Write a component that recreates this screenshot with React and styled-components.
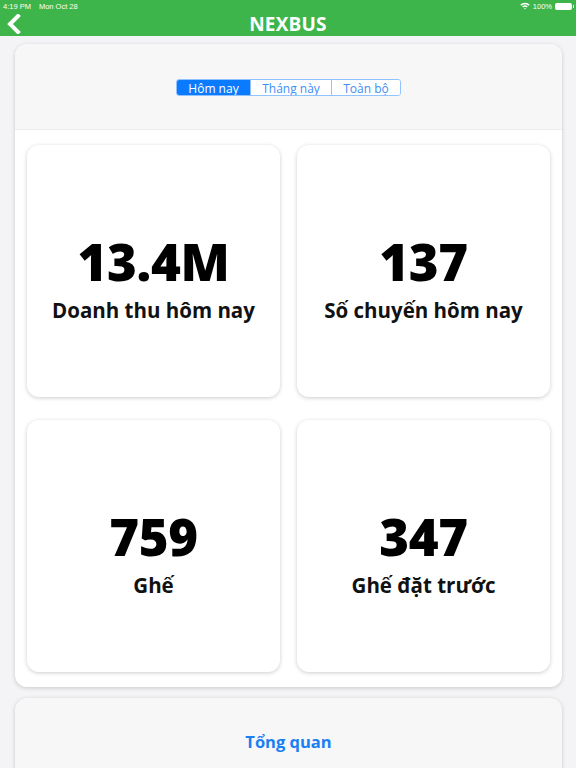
import React, { useState } from "react";
import styled, { createGlobalStyle } from "styled-components";

const Global = createGlobalStyle`
  html, body { margin: 0; padding: 0; background: #f4f4f6; }
  body { font-family: "Open Sans", "Noto Sans", sans-serif; }
  * { box-sizing: border-box; }
`;

const Page = styled.div`
  width: 576px;
  height: 768px;
  overflow: hidden;
  background: #f4f4f6;
  display: flex;
  flex-direction: column;
`;

const Header = styled.header`
  background: #3db54a;
  height: 36px;
  flex-shrink: 0;
  display: flex;
  flex-direction: column;
  position: relative;
`;

const StatusBar = styled.div`
  height: 12px;
  display: flex;
  justify-content: space-between;
  align-items: center;
  padding: 0 4px 0 3px;
  color: #fff;
  font-family: "Liberation Sans", Arial, sans-serif;
  font-size: 7.5px;
`;

const StatusGroup = styled.div`
  display: flex;
  align-items: center;
  gap: ${(p) => p.gap || 4}px;
`;

const Battery = styled.span`
  width: 17px;
  height: 7px;
  border-radius: 2px;
  background: #fff;
  position: relative;
  &::after {
    content: "";
    position: absolute;
    right: -2px;
    top: 2px;
    width: 1px;
    height: 3px;
    background: #fff;
  }
`;

const NavBar = styled.div`
  flex: 1;
  display: flex;
  align-items: center;
  justify-content: center;
  position: relative;
`;

const BackButton = styled.button`
  position: absolute;
  left: 6px;
  top: 2px;
  border: 0;
  background: none;
  padding: 0;
  display: flex;
`;

const Title = styled.h1`
  margin: 0;
  color: #fff;
  font-family: "Open Sans", sans-serif;
  font-weight: 700;
  font-size: 19px;
  letter-spacing: 0.2px;
  line-height: 1;
`;

const Content = styled.main`
  flex-shrink: 0;
  padding: 8px 14px 0 15px;
  display: flex;
  flex-direction: column;
  gap: 11px;
`;

const Panel = styled.section`
  background: #fff;
  border-radius: 12px;
  box-shadow: 0 1px 4px rgba(0, 0, 0, 0.18);
  overflow: hidden;
`;

const FilterBar = styled.div`
  background: #f7f7f8;
  height: 86px;
  display: flex;
  align-items: center;
  justify-content: center;
  border-bottom: 1px solid #ececec;
  padding-top: 1px;
`;

const Segmented = styled.div`
  display: flex;
  height: 17px;
  border: 1px solid #92c2ff;
  border-radius: 3px;
  overflow: hidden;
`;

const Segment = styled.button`
  border: 0;
  border-left: ${(p) => (p.$first ? "0" : "1px solid #92c2ff")};
  background: ${(p) => (p.$active ? "#0a7aff" : "#fff")};
  color: ${(p) => (p.$active ? "#fff" : "#3d8ef5")};
  font-family: "Open Sans", sans-serif;
  font-size: 12px;
  width: ${(p) => p.$w}px;
  padding: 1px 0 0;
  line-height: 15px;
  height: 100%;
  overflow: hidden;
  cursor: pointer;
`;

const Grid = styled.div`
  display: grid;
  grid-template-columns: 1fr 1fr;
  column-gap: 17px;
  row-gap: 23px;
  padding: 15px 12px 15px 12px;
`;

const StatCard = styled.div`
  height: 252px;
  border-radius: 12px;
  background: #fff;
  box-shadow: 0 1px 4px rgba(0, 0, 0, 0.2);
  display: flex;
  flex-direction: column;
  align-items: center;
  justify-content: center;
  padding-top: 15px;
`;

const StatValue = styled.div`
  font-family: "Open Sans", sans-serif;
  font-weight: 800;
  font-size: 51px;
  line-height: 1;
  color: #000;
  letter-spacing: -0.3px;
`;

const StatLabel = styled.div`
  margin-top: 13px;
  font-family: "Open Sans", sans-serif;
  font-weight: 700;
  font-size: 20.5px;
  color: #111;
  line-height: 1;
`;

const SummaryPanel = styled.section`
  background: #f7f7f8;
  border-radius: 12px 12px 0 0;
  box-shadow: 0 1px 4px rgba(0, 0, 0, 0.18);
  height: 90px;
  display: flex;
  justify-content: center;
  padding-top: 36px;
`;

const SummaryLink = styled.a`
  font-family: "Open Sans", sans-serif;
  font-weight: 700;
  font-size: 16.5px;
  color: #1a7ff2;
  line-height: 1;
  text-decoration: none;
`;

const stats = [
  { value: "13.4M", label: "Doanh thu hôm nay" },
  { value: "137", label: "Số chuyến hôm nay" },
  { value: "759", label: "Ghế" },
  { value: "347", label: "Ghế đặt trước" },
];

const tabs = [
  { label: "Hôm nay", w: 73 },
  { label: "Tháng này", w: 81 },
  { label: "Toàn bộ", w: 69 },
];

export default function App() {
  const [active, setActive] = useState(0);
  return (
    <>
      <Global />
      <Page>
        <Header>
          <StatusBar>
            <StatusGroup gap={8}>
              <span>4:19 PM</span>
              <span>Mon Oct 28</span>
            </StatusGroup>
            <StatusGroup gap={3}>
              <svg width="10" height="8" viewBox="0 0 10 8">
                <path d="M0.3 2.6 A6.6 6.6 0 0 1 9.7 2.6 L8.6 3.7 A5 5 0 0 0 1.4 3.7 Z" fill="#fff" />
                <path d="M2.2 4.5 A4 4 0 0 1 7.8 4.5 L6.7 5.6 A2.4 2.4 0 0 0 3.3 5.6 Z" fill="#fff" />
                <path d="M4 6.5 A1.4 1.4 0 0 1 6 6.5 L5 7.6 Z" fill="#fff" />
              </svg>
              <span>100%</span>
              <Battery />
            </StatusGroup>
          </StatusBar>
          <NavBar>
            <BackButton aria-label="Back">
              <svg width="16" height="20" viewBox="0 0 16 20">
                <path d="M12 2 L4 10 L12 18" fill="none" stroke="#fff" strokeWidth="4" strokeLinecap="square" strokeLinejoin="miter" />
              </svg>
            </BackButton>
            <Title>NEXBUS</Title>
          </NavBar>
        </Header>
        <Content>
          <Panel>
            <FilterBar>
              <Segmented>
                {tabs.map((t, i) => (
                  <Segment
                    key={t.label}
                    $first={i === 0}
                    $active={active === i}
                    $w={t.w}
                    onClick={() => setActive(i)}
                  >
                    {t.label}
                  </Segment>
                ))}
              </Segmented>
            </FilterBar>
            <Grid>
              {stats.map((s) => (
                <StatCard key={s.label}>
                  <StatValue>{s.value}</StatValue>
                  <StatLabel>{s.label}</StatLabel>
                </StatCard>
              ))}
            </Grid>
          </Panel>
          <SummaryPanel>
            <SummaryLink href="#">Tổng quan</SummaryLink>
          </SummaryPanel>
        </Content>
      </Page>
    </>
  );
}
